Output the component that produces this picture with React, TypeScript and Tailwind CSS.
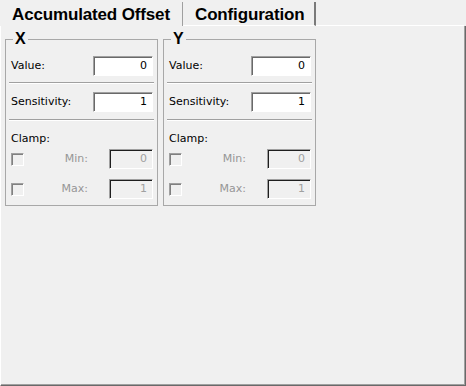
const label = "font-['DejaVu_Sans','Liberation_Sans',sans-serif] text-[11px]";
const heading = "font-['Liberation_Sans',Arial,sans-serif] font-bold text-[16px]";
const tabText = "font-['Liberation_Sans',Arial,sans-serif] font-bold text-[17px] tracking-[-0.15px]";

function Field({ value, width, disabled }: { value: string; width: number; disabled?: boolean }) {
  return (
    <div
      className={
        disabled
          ? "h-[20px] flex items-center justify-end pr-[5px] pt-[1px] bg-[#f0f0f0] border border-t-[#a0a0a0] border-l-[#a0a0a0] border-r-white border-b-white shadow-[inset_1px_1px_0_#1e1e1e] text-[#a0a0a0]"
          : "h-[20px] flex items-center justify-end pr-[5px] pt-[1px] bg-white border border-t-[#a0a0a0] border-l-[#a0a0a0] border-r-white border-b-white shadow-[inset_1px_1px_0_#696969] text-black"
      }
      style={{ width }}
    >
      {value}
    </div>
  );
}

function Separator() {
  return <div className="-ml-[2px] -mr-[1px] border-t border-t-[#a0a0a0] border-b border-b-white" />;
}

function ClampRow({ name, value, className }: { name: string; value: string; className: string }) {
  return (
    <div className={`h-[20px] flex items-center ${className}`}>
      <div className="w-[13px] h-[13px] bg-[#f0f0f0] border border-t-[#a0a0a0] border-l-[#a0a0a0] border-r-white border-b-white shadow-[inset_1px_1px_0_#808080]" />
      <span className="flex-1 text-right pr-[21px] pt-[1px] text-[#969696]">{name}</span>
      <Field value={value} width={44} disabled />
    </div>
  );
}

function AxisGroup({ title }: { title: string }) {
  return (
    <div className={`relative w-[153px] h-[167px] border border-[#a8a8a8] pl-[5px] pr-[4px] pt-[16px] ${label}`}>
      <span className={`absolute -top-[10px] left-[7px] px-[2px] bg-[#f0f0f0] leading-[18px] ${heading}`}>
        {title}
      </span>
      <div className="h-[20px] flex items-center justify-between">
        <span className="pt-[1px]">Value:</span>
        <Field value="0" width={60} />
      </div>
      <div className="mt-[6px]">
        <Separator />
      </div>
      <div className="mt-[8px] h-[20px] flex items-center justify-between">
        <span className="pt-[1px]">Sensitivity:</span>
        <Field value="1" width={60} />
      </div>
      <div className="mt-[7px]">
        <Separator />
      </div>
      <div className="mt-[9px] leading-[15px] pt-[1px]">Clamp:</div>
      <ClampRow name="Min:" value="0" className="mt-[3px]" />
      <ClampRow name="Max:" value="1" className="mt-[10px]" />
    </div>
  );
}

export default function App() {
  return (
    <div className="w-[466px] h-[386px] bg-[#f0f0f0] flex flex-col text-black">
      <div className="h-[26px] flex pt-[2px]">
        <div className={`w-[183px] pl-[12px] pt-[2px] flex items-center border-r border-r-[#a0a0a0] ${tabText}`}>
          Accumulated Offset
        </div>
        <div className={`w-[133px] pl-[12px] pt-[2px] flex items-center border-r-2 border-r-[#7a7a7a] border-b border-b-white ${tabText}`}>
          Configuration
        </div>
        <div className="flex-1 border-b border-b-white mr-[2px]" />
      </div>
      <div className="flex-1 flex gap-[5px] items-start pl-[4px] pt-[13px] border-l border-l-white border-r border-r-[#696969] border-b border-b-[#696969] shadow-[inset_-1px_-1px_0_#a0a0a0]">
        <AxisGroup title="X" />
        <AxisGroup title="Y" />
      </div>
    </div>
  );
}
